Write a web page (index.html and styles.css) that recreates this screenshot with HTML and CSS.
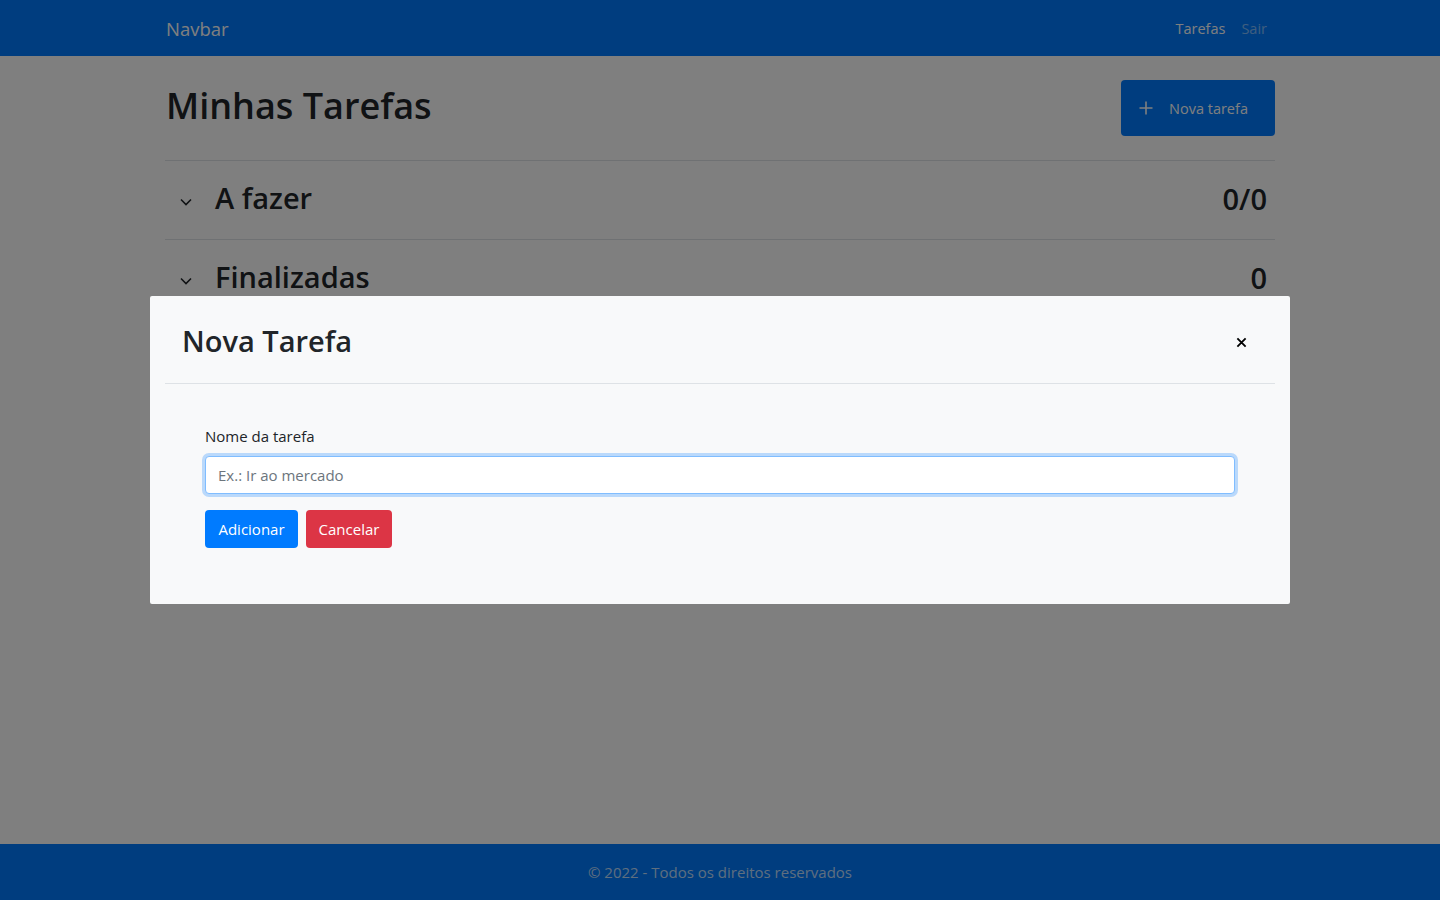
FILE: index.html
```html
<!DOCTYPE html>
<html lang="pt-BR">
<head>
<meta charset="utf-8">
<title>Minhas Tarefas</title>
<link rel="stylesheet" href="styles.css">
</head>
<body>
<nav class="navbar">
  <div class="container nav-inner">
    <a class="brand">Navbar</a>
    <div class="nav-links">
      <a class="nav-link active">Tarefas</a>
      <a class="nav-link">Sair</a>
    </div>
  </div>
</nav>
<main class="container main">
  <div class="page-head">
    <h1 class="title">Minhas Tarefas</h1>
    <button class="btn-new">
      <svg width="16" height="16" viewBox="0 0 16 16"><path d="M8 1.5v13M1.5 8h13" stroke="currentColor" stroke-width="1.6" fill="none"/></svg>
      <span>Nova tarefa</span>
    </button>
  </div>
  <section class="group">
    <div class="group-head">
      <svg class="chev" width="14" height="14" viewBox="0 0 14 14"><path d="M2 4.5l5 5 5-5" stroke="currentColor" stroke-width="1.6" fill="none"/></svg>
      <h2 class="group-title">A fazer</h2>
      <span class="count">0/0</span>
    </div>
  </section>
  <section class="group">
    <div class="group-head">
      <svg class="chev" width="14" height="14" viewBox="0 0 14 14"><path d="M2 4.5l5 5 5-5" stroke="currentColor" stroke-width="1.6" fill="none"/></svg>
      <h2 class="group-title">Finalizadas</h2>
      <span class="count">0</span>
    </div>
  </section>
</main>
<footer class="footer">© 2022 - Todos os direitos reservados</footer>

<div class="backdrop"></div>
<div class="modal-wrap">
  <div class="modal">
    <div class="modal-header">
      <h3 class="modal-title">Nova Tarefa</h3>
      <button class="close">
        <svg width="11" height="11" viewBox="0 0 12 12"><path d="M1.5 1.5l9 9M10.5 1.5l-9 9" stroke="currentColor" stroke-width="2" fill="none"/></svg>
      </button>
    </div>
    <div class="modal-body">
      <label class="label" for="nome">Nome da tarefa</label>
      <input id="nome" class="input" type="text" placeholder="Ex.: Ir ao mercado">
      <div class="actions">
        <button class="btn btn-primary">Adicionar</button>
        <button class="btn btn-danger">Cancelar</button>
      </div>
    </div>
  </div>
</div>
</body>
</html>
```

FILE: styles.css
```css
* { box-sizing: border-box; }
html, body { height: 100%; }
body {
  margin: 0;
  font-family: "Open Sans", "Noto Sans", "Liberation Sans", sans-serif;
  color: #212529;
  background: #fff;
  display: flex;
  flex-direction: column;
  min-height: 100vh;
}
.container {
  width: 1140px;
  margin: 0 auto;
  padding: 0 15px;
}
.navbar {
  background: #007bff;
  height: 56px;
  flex-shrink: 0;
}
.nav-inner {
  height: 56px;
  display: flex;
  align-items: center;
  justify-content: space-between;
}
.brand {
  color: #fff;
  font-size: 18.5px;
  padding-left: 1px;
}
.nav-links { display: flex; padding-right: 0; }
.nav-link {
  color: rgba(255,255,255,.5);
  font-size: 14.5px;
  padding: 0 8px;
}
.nav-link.active { color: #fff; }

.main { flex: 1; }
.page-head {
  margin-top: 24px;
  height: 56px;
  display: flex;
  align-items: center;
  justify-content: space-between;
  margin-bottom: 24px;
}
.title {
  margin: 0 0 5px;
  font-size: 36px;
  font-weight: 600;
  line-height: 1.2;
  padding-left: 1px;
}
.btn-new {
  height: 56px;
  width: 154px;
  background: #007bff;
  color: #fff;
  border: 0;
  border-radius: 4px;
  font: inherit;
  font-size: 14.5px;
  display: flex;
  align-items: center;
  gap: 15px;
  padding: 0 0 0 17px;
}
.group { border-top: 1px solid #dee2e6; }
.group-head {
  height: 78px;
  display: flex;
  align-items: center;
  padding: 0 8px 4px 14px;
}
.chev { margin-right: 22px; margin-top: 8px; color: #212529; }
.group-title {
  margin: 0;
  font-size: 29px;
  font-weight: 600;
  line-height: 1.2;
  flex: 1;
}
.count {
  font-size: 29px;
  font-weight: 600;
}
.footer {
  background: #007bff;
  height: 56px;
  flex-shrink: 0;
  display: flex;
  align-items: center;
  justify-content: center;
  color: rgba(255,255,255,.75);
  font-size: 15px;
}

.backdrop {
  position: fixed;
  inset: 0;
  background: rgba(0,0,0,.5);
}
.modal-wrap {
  position: fixed;
  inset: 0;
  display: flex;
  justify-content: center;
  padding-top: 296px;
}
.modal {
  width: 1140px;
  height: 308px;
  background: #f8f9fa;
  border-radius: 2px;
}
.modal-header {
  margin: 0 15px;
  height: 88px;
  border-bottom: 1px solid #dee2e6;
  display: flex;
  align-items: center;
  justify-content: space-between;
  padding: 4px 28px 0 17px;
}
.modal-title {
  margin: 0;
  font-size: 29px;
  font-weight: 600;
  line-height: 1.2;
}
.close {
  background: none;
  border: 0;
  padding: 0;
  color: #000;
  display: flex;
  margin-top: 2px;
}
.modal-body {
  padding: 40px 55px 0;
}
.label {
  display: block;
  font-size: 15px;
  line-height: 24px;
  margin-bottom: 8px;
}
.input {
  display: block;
  width: 100%;
  height: 38px;
  border: 1px solid #80bdff;
  border-radius: 4px;
  box-shadow: 0 0 0 3px rgba(0,123,255,.25);
  outline: none;
  font: inherit;
  font-size: 15px;
  color: #495057;
  padding: 0 12px;
  background: #fff;
}
.input::placeholder { color: #6c757d; }
.actions {
  display: flex;
  gap: 8px;
  margin-top: 16px;
}
.btn {
  height: 38px;
  border: 0;
  border-radius: 4px;
  font: inherit;
  font-size: 15px;
  color: #fff;
  padding: 0;
}
.btn-primary { background: #007bff; width: 93px; }
.btn-danger { background: #dc3545; width: 86px; }
```
